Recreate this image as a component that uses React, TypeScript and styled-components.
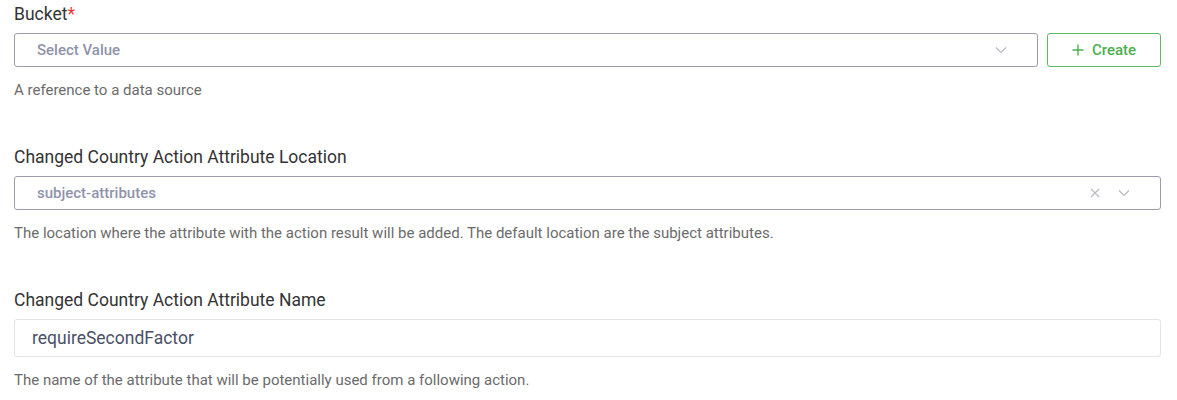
import styled, { createGlobalStyle } from "styled-components";

const GlobalStyle = createGlobalStyle`
  body {
    margin: 0;
    background: #ffffff;
    font-family: Roboto, "Liberation Sans", Arial, sans-serif;
  }
`;

const Page = styled.div`
  padding: 4px 16px 10px 14px;
  display: flex;
  flex-direction: column;
  gap: 47px;
`;

const Field = styled.div`
  display: flex;
  flex-direction: column;
`;

const Label = styled.label`
  font-size: 17.5px;
  line-height: 20px;
  color: #333333;
  margin-bottom: 9px;
`;

const Required = styled.span`
  color: #e53935;
`;

const Row = styled.div`
  display: flex;
  gap: 9px;
`;

const SelectBox = styled.div<{ $grow?: boolean }>`
  flex: ${(p) => (p.$grow ? "1" : "none")};
  height: 34px;
  box-sizing: border-box;
  border: 1px solid #9c9cae;
  border-radius: 3px;
  display: flex;
  align-items: center;
  padding: 0 30px 0 22px;
`;

const SelectText = styled.span`
  flex: 1;
  font-size: 15px;
  font-weight: 500;
  color: #8f93aa;
`;

const IconSlot = styled.span`
  display: flex;
  align-items: center;
  color: #b8b8c4;
  margin-left: 18px;
`;

const CreateButton = styled.button`
  width: 114px;
  height: 34px;
  border: 1px solid #5fb865;
  border-radius: 3px;
  background: #ffffff;
  color: #4caf50;
  font-family: inherit;
  font-size: 15px;
  font-weight: 500;
  display: flex;
  align-items: center;
  justify-content: center;
  gap: 8px;
  cursor: pointer;
`;

const TextInput = styled.input`
  height: 38px;
  box-sizing: border-box;
  border: 1px solid #e3e3e8;
  border-radius: 3px;
  padding: 0 17px;
  font-family: inherit;
  font-size: 17.5px;
  color: #4a4f66;
  outline: none;
`;

const Help = styled.div`
  margin-top: 13px;
  font-size: 15px;
  line-height: 20px;
  color: #6b6b6b;
`;

const Chevron = () => (
  <svg width="12" height="8" viewBox="0 0 12 8" fill="none">
    <path d="M1 1.5l5 5 5-5" stroke="currentColor" strokeWidth="1.2" />
  </svg>
);

const Cross = () => (
  <svg width="10" height="10" viewBox="0 0 10 10" fill="none">
    <path d="M1 1l8 8M9 1l-8 8" stroke="currentColor" strokeWidth="1.2" />
  </svg>
);

const Plus = () => (
  <svg width="12" height="12" viewBox="0 0 12 12" fill="none">
    <path d="M6 0.5v11M0.5 6h11" stroke="currentColor" strokeWidth="1.4" />
  </svg>
);

export default function App() {
  return (
    <>
      <GlobalStyle />
      <Page>
        <Field>
          <Label>
            Bucket<Required>*</Required>
          </Label>
          <Row>
            <SelectBox $grow>
              <SelectText>Select Value</SelectText>
              <IconSlot>
                <Chevron />
              </IconSlot>
            </SelectBox>
            <CreateButton>
              <Plus />
              Create
            </CreateButton>
          </Row>
          <Help>A reference to a data source</Help>
        </Field>

        <Field>
          <Label>Changed Country Action Attribute Location</Label>
          <SelectBox>
            <SelectText>subject-attributes</SelectText>
            <IconSlot>
              <Cross />
            </IconSlot>
            <IconSlot>
              <Chevron />
            </IconSlot>
          </SelectBox>
          <Help>
            The location where the attribute with the action result will be added. The default
            location are the subject attributes.
          </Help>
        </Field>

        <Field>
          <Label>Changed Country Action Attribute Name</Label>
          <TextInput defaultValue="requireSecondFactor" />
          <Help>The name of the attribute that will be potentially used from a following action.</Help>
        </Field>
      </Page>
    </>
  );
}
